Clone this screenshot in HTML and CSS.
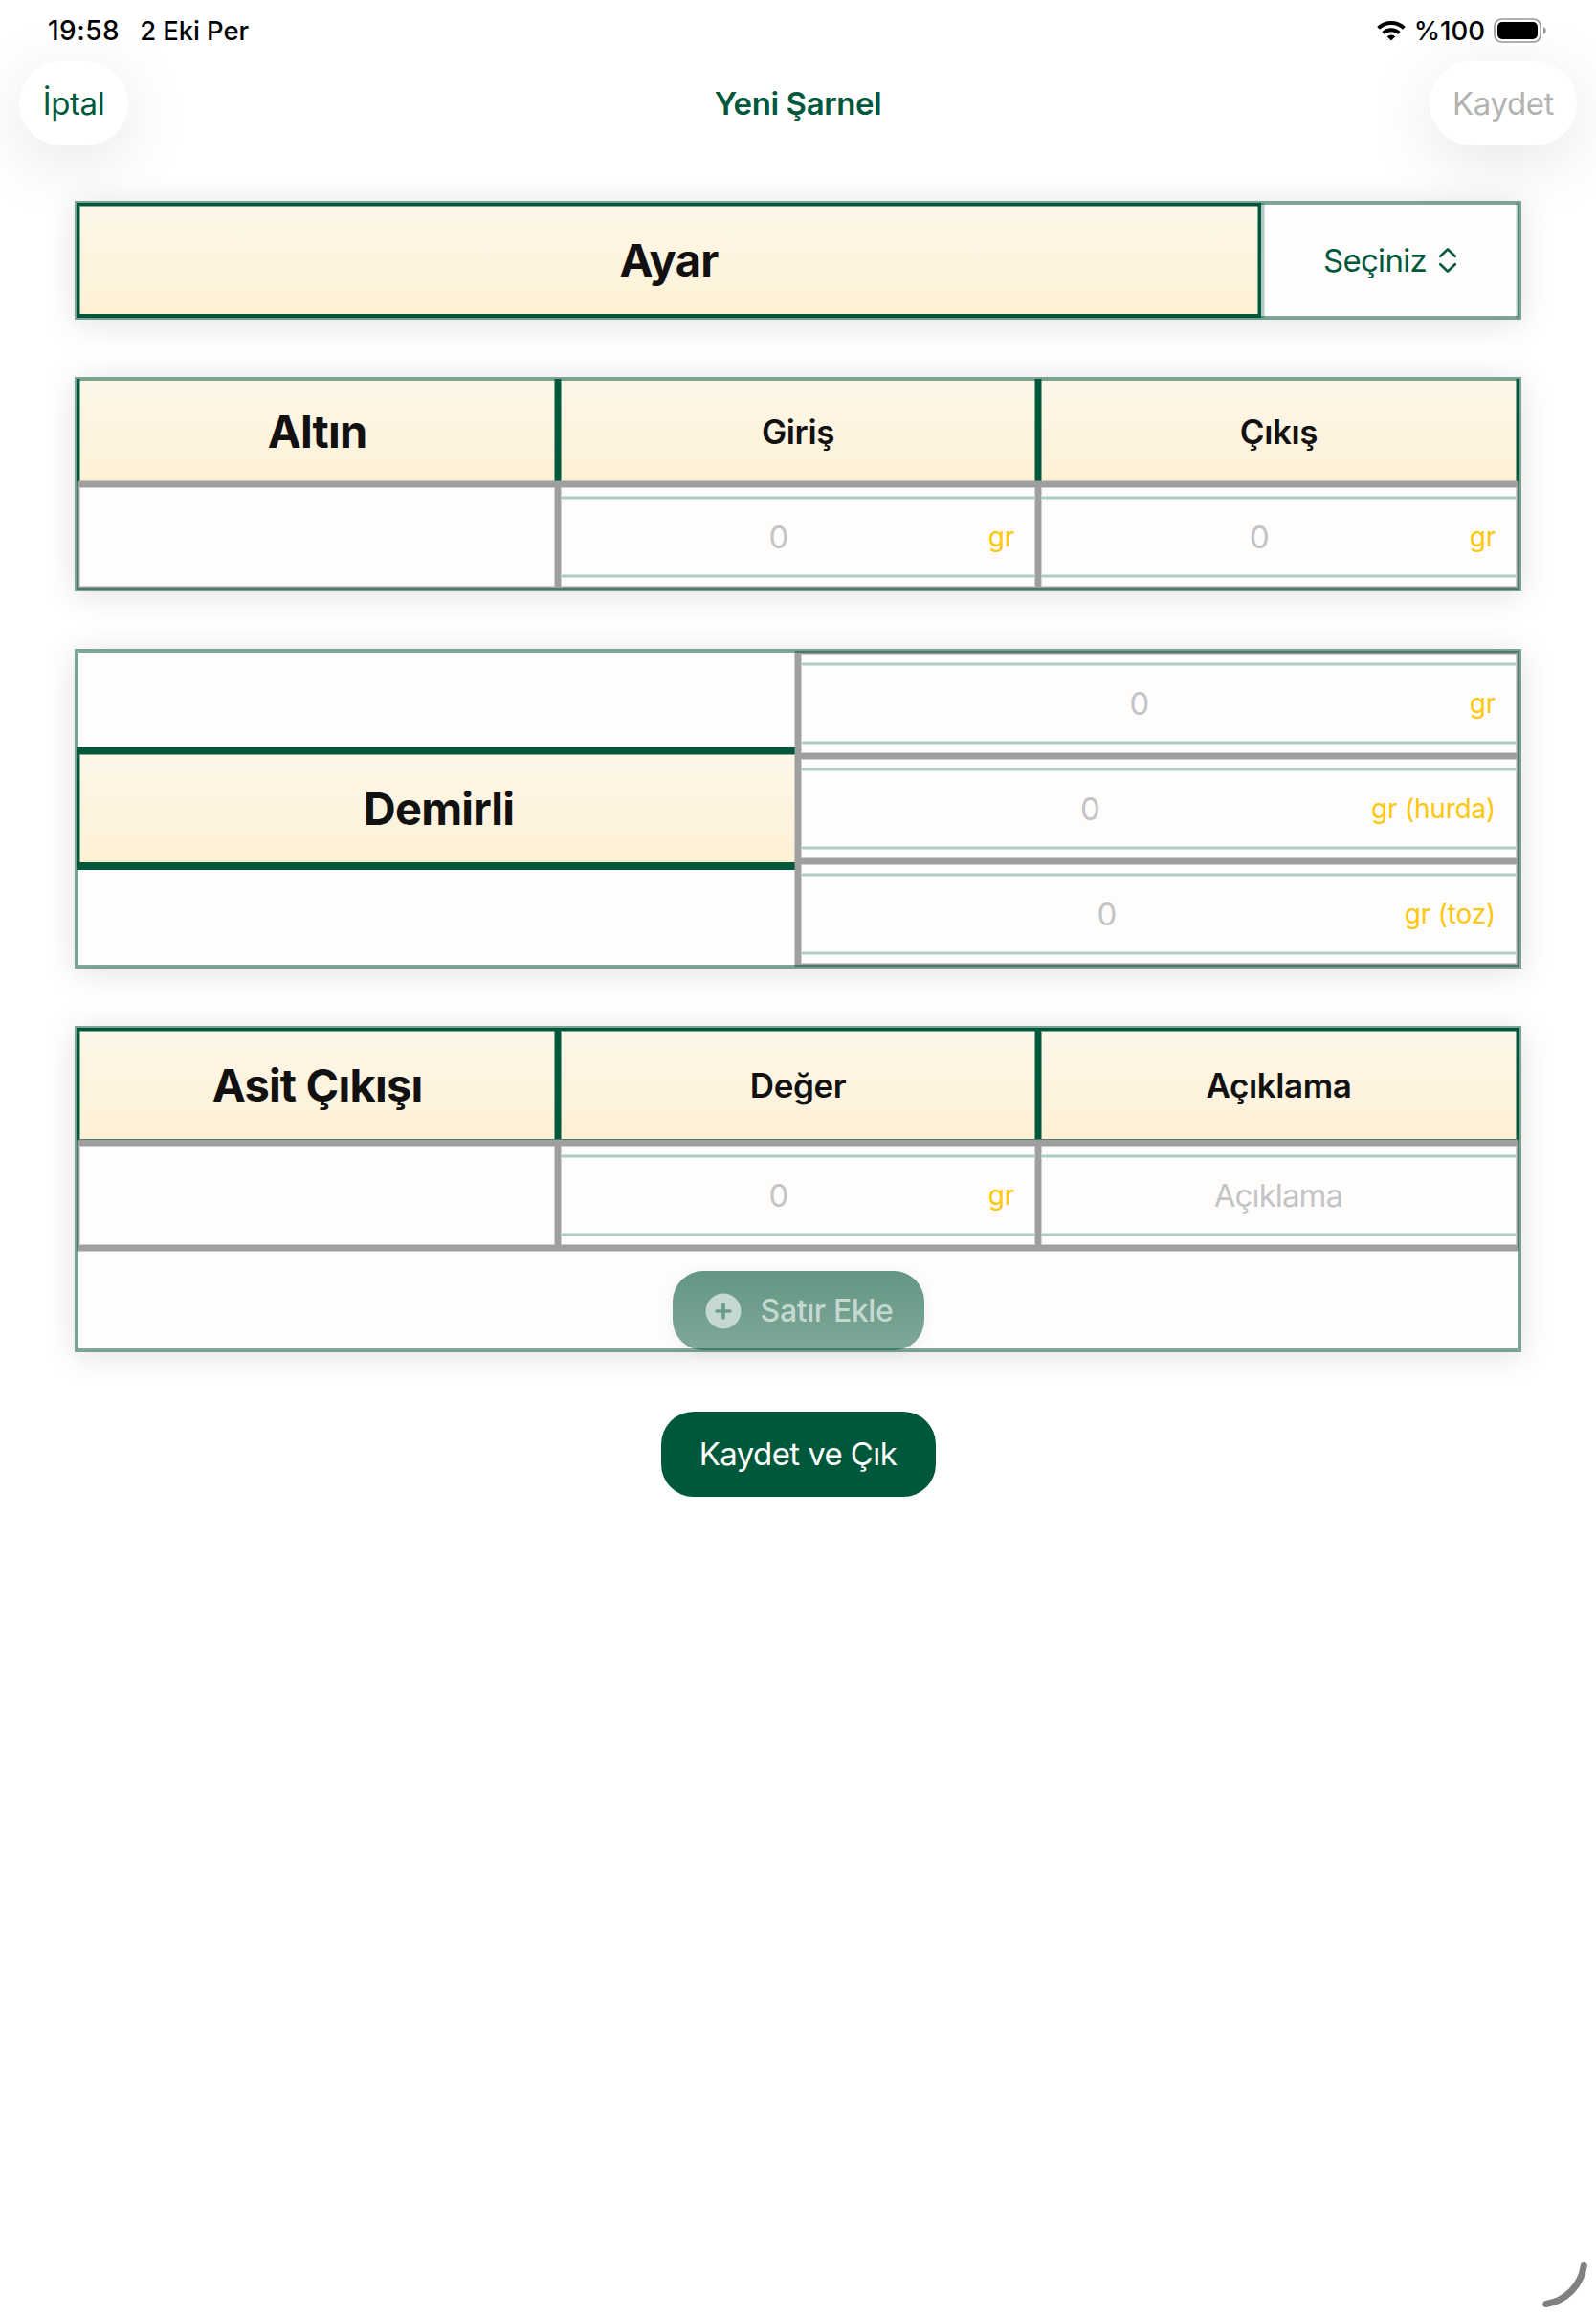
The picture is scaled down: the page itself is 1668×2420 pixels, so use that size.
FILE: index.html
```html
<!DOCTYPE html>
<html lang="tr">
<head>
<meta charset="utf-8">
<title>Yeni Şarnel</title>
<link rel="stylesheet" href="styles.css">
</head>
<body>
<div class="screen">
  <header class="status">
    <div class="status-side"><span class="clock">19:58</span><span class="date">2 Eki Per</span></div>
    <div class="status-side status-right">
      <svg class="wifi" width="30" height="21" viewBox="0 0 30 21"><path d="M1.600 7.400a19.400 19.400 0 0 1 26.800 0" fill="none" stroke="#000" stroke-width="4"/><path d="M6.600 12.600a12.200 12.200 0 0 1 16.800 0" fill="none" stroke="#000" stroke-width="3.800"/><path d="M15 20.600l-4.300-4.300a6.200 6.200 0 0 1 8.600 0z"/></svg>
      <span class="percent">%100</span>
      <svg class="battery" width="55" height="26" viewBox="0 0 55 26"><rect x="1" y="1" width="48" height="24" rx="7.500" fill="none" stroke="#9b9b9b" stroke-width="1.700"/><rect x="4" y="4" width="42" height="18" rx="5"/><path d="M52 9v8c1.700-.7 2.800-2.200 2.800-4s-1.100-3.300-2.800-4z" fill="#9b9b9b"/></svg>
    </div>
  </header>
  <nav class="nav">
    <button class="pill cancel">İptal</button>
    <h1 class="title">Yeni Şarnel</h1>
    <button class="pill save">Kaydet</button>
  </nav>

  <main class="content">
    <section class="card ayar">
      <div class="head boxed"><span class="big">Ayar</span></div>
      <div class="picker">
        <span>Seçiniz</span>
        <svg width="20" height="28" viewBox="0 0 20 28" fill="none" stroke="#00583c" stroke-width="2.700" stroke-linecap="round" stroke-linejoin="round"><path d="M2.300 9.800L10 2.400l7.700 7.400M2.300 18.200L10 25.600l7.700-7.400"/></svg>
      </div>
    </section>

    <section class="card">
      <div class="heads thirds">
        <div class="head sides"><span class="big">Altın</span></div>
        <div class="head sides"><span class="mid">Giriş</span></div>
        <div class="head sides"><span class="mid">Çıkış</span></div>
      </div>
      <div class="row thirds">
        <div class="cell"></div>
        <div class="cell"><div class="field"><span class="zero">0</span><span class="unit">gr</span></div></div>
        <div class="cell"><div class="field"><span class="zero">0</span><span class="unit">gr</span></div></div>
      </div>
    </section>

    <section class="card demirli">
      <div class="label-side"><div class="head boxed banner"><span class="big">Demirli</span></div></div>
      <div class="stack">
        <div class="cell"><div class="field"><span class="zero">0</span><span class="unit">gr</span></div></div>
        <div class="cell"><div class="field"><span class="zero">0</span><span class="unit">gr (hurda)</span></div></div>
        <div class="cell"><div class="field"><span class="zero">0</span><span class="unit">gr (toz)</span></div></div>
      </div>
    </section>

    <section class="card">
      <div class="heads tall thirds">
        <div class="head boxed"><span class="big">Asit Çıkışı</span></div>
        <div class="head boxed"><span class="mid">Değer</span></div>
        <div class="head boxed"><span class="mid">Açıklama</span></div>
      </div>
      <div class="row closed thirds">
        <div class="cell"></div>
        <div class="cell"><div class="field"><span class="zero">0</span><span class="unit">gr</span></div></div>
        <div class="cell"><div class="field"><span class="zero note">Açıklama</span></div></div>
      </div>
      <div class="adder">
        <button class="add">
          <svg width="38" height="38" viewBox="0 0 38 38"><circle cx="19" cy="19" r="18.500" fill="#c5d8d1"/><path d="M19 12v14M12 19h14" stroke="#6b9b8a" stroke-width="3.600" stroke-linecap="round"/></svg>
          <span>Satır Ekle</span>
        </button>
      </div>
    </section>

    <button class="submit">Kaydet ve Çık</button>
  </main>

  <svg class="corner" width="60" height="60" viewBox="0 0 60 60"><path d="M47.300 7.500A47 47 0 0 1 7.800 47.500" fill="none" stroke="#808080" stroke-width="7" stroke-linecap="round"/></svg>
</div>
</body>
</html>
```
FILE: styles.css
```css
:root {
  --green: #00583c;
  --gray: #9f9f9f;
  --soft: rgba(159, 159, 159, .5);
}
* { box-sizing: border-box; }
body {
  margin: 0;
  background: #fff;
  font-family: Inter, "Liberation Sans", sans-serif;
  color: #111;
}
button { border: 0; font: inherit; padding: 0; }
.screen {
  position: relative;
  width: 1668px;
  height: 2420px;
  overflow: hidden;
  display: flex;
  flex-direction: column;
}

.status {
  height: 64px;
  padding: 0 52px 0 50px;
  display: flex;
  justify-content: space-between;
  align-items: center;
  font-size: 27.5px;
  font-weight: 500;
  color: #000;
}
.status-side { display: flex; align-items: center; }
.clock { font-size: 28px; letter-spacing: .5px; }
.date { margin-left: 21px; letter-spacing: -.1px; }
.percent { margin: 0 9px 0 9px; }

.nav {
  height: 88px;
  padding: 0 20px;
  display: grid;
  grid-template-columns: 114px 1fr 114px;
  align-items: center;
}
.pill {
  height: 88px;
  border-radius: 44px;
  background: #fff;
  font-size: 33px;
  letter-spacing: -.4px;
  color: var(--green);
  box-shadow: 0 16px 72px rgba(0, 0, 0, .1);
}
.cancel { width: 114px; justify-self: start; }
.save { width: 154px; justify-self: end; color: #b3b3b3; }
.title {
  margin: 0;
  padding-bottom: 1px;
  text-align: center;
  font-size: 33px;
  font-weight: 600;
  letter-spacing: -.4px;
  color: var(--green);
}

.content {
  padding: 60px 80px 0;
  display: flex;
  flex-direction: column;
  gap: 64px;
}
.card {
  position: relative;
  background: #fefdfc;
  box-shadow: 0 4px 32px 2px rgba(0, 0, 0, .12);
}
.card::after {
  content: "";
  position: absolute;
  inset: -2px;
  border: 4px solid rgba(0, 82, 50, .5);
  pointer-events: none;
}
.ayar { display: grid; grid-template-columns: 1238px 270px; height: 120px; }
.thirds { display: grid; grid-template-columns: 503px 502px 503px; }
.heads { height: 110px; }
.heads.tall { height: 120px; }

.head {
  display: flex;
  align-items: center;
  justify-content: center;
  background: linear-gradient(#fef7e8, #fdf3de 60%, #fef1d4);
}
.sides {
  border: solid var(--green);
  border-width: 0 3px;
  box-shadow: inset 1px 0 rgba(0, 88, 60, .5), inset -1px 0 rgba(0, 88, 60, .5);
}
.boxed {
  border: 3px solid var(--green);
  border-bottom-width: 4px;
  box-shadow: inset 1px 1px rgba(0, 88, 60, .5), inset -1px 0 rgba(0, 88, 60, .5);
}
.big { font-size: 47px; font-weight: 700; letter-spacing: -.8px; padding-bottom: 1px; }
.mid { font-size: 35px; font-weight: 600; letter-spacing: -.4px; }

.picker {
  display: flex;
  align-items: center;
  justify-content: center;
  gap: 12px;
  font-size: 33px;
  letter-spacing: -.7px;
  color: var(--green);
  border: solid rgba(0, 88, 60, .3);
  border-width: 0 3px;
  box-shadow: inset 1px 0 rgba(0, 88, 60, .15), inset -1px 0 rgba(0, 88, 60, .15);
}

.row {
  position: relative;
  height: 110px;
  box-shadow: 0 -3px var(--gray), 0 -4px var(--soft);
}
.closed {
  box-shadow: 0 -3px var(--gray), 0 -4px var(--soft), 0 3px var(--gray), 0 4px var(--soft);
}
.cell {
  height: 110px;
  border: 3px solid var(--gray);
  box-shadow: inset 0 0 0 1px var(--soft);
  padding: 9px 0;
  background: #fefdfc;
}
.field {
  height: 86px;
  padding: 0 22px 0 21px;
  display: flex;
  align-items: center;
  gap: 12px;
  background: linear-gradient(#d6e5df 1px, #b0cbc1 1px 3px, #d6e5df 3px 4px, transparent 4px 82px, #d6e5df 82px 83px, #b0cbc1 83px 85px, #d6e5df 85px);
}
.zero { flex: 1; text-align: center; font-size: 33px; color: #c4c4c7; }
.note { letter-spacing: -.9px; }
.unit { font-size: 28px; letter-spacing: -.2px; color: #fdc70c; white-space: nowrap; }

.demirli { display: grid; grid-template-columns: 754px 754px; height: 330px; }
.label-side { display: flex; align-items: center; }
.banner {
  width: 754px;
  height: 128px;
  border-width: 7px 0 8px 3px;
}
.stack { box-shadow: -3px 0 var(--gray), -4px 0 var(--soft); position: relative; }

.adder { height: 107px; padding-top: 24px; display: flex; justify-content: center; }
.add {
  width: 263px;
  height: 83px;
  border-radius: 32px;
  display: flex;
  align-items: center;
  justify-content: center;
  gap: 20px;
  padding-left: 2px;
  font-size: 32px;
  font-weight: 500;
  letter-spacing: -.4px;
  color: #c5d8d1;
  background: linear-gradient(#639683, #7fa898);
  box-shadow: 0 2px 14px rgba(0, 0, 0, .06);
}
.submit {
  align-self: center;
  width: 287px;
  height: 89px;
  padding-bottom: 1px;
  border-radius: 34px;
  background: var(--green);
  color: #fff;
  font-size: 33px;
  letter-spacing: -.6px;
}
.corner { position: absolute; right: 0; bottom: 0; }
```
